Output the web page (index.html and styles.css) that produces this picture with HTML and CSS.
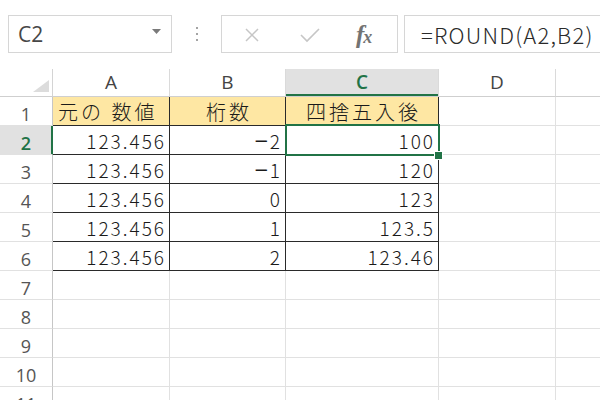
FILE: index.html
```html
<!DOCTYPE html>
<html lang="ja">
<head>
<meta charset="utf-8">
<title>ROUND</title>
<link rel="stylesheet" href="styles.css">
</head>
<body>
<div class="toolbar">
  <div class="namebox">
    <span class="name">C2</span>
    <svg class="caret" width="9" height="5" viewBox="0 0 9 5"><polygon points="0,0 9,0 4.5,5" fill="#7a7a7a"/></svg>
  </div>
  <div class="dots"><i></i><i></i><i></i></div>
  <div class="fbuttons">
    <svg class="icon-x" width="16" height="16" viewBox="0 0 16 16"><path d="M2 2 L14 14 M14 2 L2 14" stroke="#c6c6c6" stroke-width="1.5" fill="none"/></svg>
    <svg class="icon-check" width="20" height="16" viewBox="0 0 20 16"><polyline points="1,8 7,14 19,2" stroke="#c6c6c6" stroke-width="1.6" fill="none"/></svg>
    <span class="fx">f<span class="fx-x">x</span></span>
  </div>
  <div class="formula">=ROUND(A2,B2)</div>
</div>

<div class="sheet">
  <div class="corner"><svg width="16" height="12" viewBox="0 0 16 12"><polygon points="16,0 16,12 0,12" fill="#dcdcdc"/></svg></div>
  <div class="ch">A</div>
  <div class="ch">B</div>
  <div class="ch active">C</div>
  <div class="ch">D</div>
  <div class="ch"></div>

  <div class="rh">1</div>
  <div class="c t head left">元の 数値</div>
  <div class="c t head center">桁数</div>
  <div class="c t head center">四捨五入後</div>
  <div class="c"></div>
  <div class="c"></div>

  <div class="rh active">2</div>
  <div class="c t num">123.456</div>
  <div class="c t num"><span class="m">−</span>2</div>
  <div class="c t num selected">100</div>
  <div class="c"></div>
  <div class="c"></div>

  <div class="rh">3</div>
  <div class="c t num">123.456</div>
  <div class="c t num"><span class="m">−</span>1</div>
  <div class="c t num">120</div>
  <div class="c"></div>
  <div class="c"></div>

  <div class="rh">4</div>
  <div class="c t num">123.456</div>
  <div class="c t num">0</div>
  <div class="c t num">123</div>
  <div class="c"></div>
  <div class="c"></div>

  <div class="rh">5</div>
  <div class="c t num">123.456</div>
  <div class="c t num">1</div>
  <div class="c t num">123.5</div>
  <div class="c"></div>
  <div class="c"></div>

  <div class="rh">6</div>
  <div class="c t num">123.456</div>
  <div class="c t num">2</div>
  <div class="c t num">123.46</div>
  <div class="c"></div>
  <div class="c"></div>

  <div class="rh">7</div>
  <div class="c"></div><div class="c"></div><div class="c"></div><div class="c"></div><div class="c"></div>
  <div class="rh">8</div>
  <div class="c"></div><div class="c"></div><div class="c"></div><div class="c"></div><div class="c"></div>
  <div class="rh">9</div>
  <div class="c"></div><div class="c"></div><div class="c"></div><div class="c"></div><div class="c"></div>
  <div class="rh">10</div>
  <div class="c"></div><div class="c"></div><div class="c"></div><div class="c"></div><div class="c"></div>
  <div class="rh">11</div>
  <div class="c"></div><div class="c"></div><div class="c"></div><div class="c"></div><div class="c"></div>
</div>
</body>
</html>
```

FILE: styles.css
```css
html, body {
  margin: 0;
  padding: 0;
  background: #ffffff;
  overflow: hidden;
  width: 600px;
  height: 400px;
}

body {
  font-family: "Open Sans", "Noto Sans", sans-serif;
  color: #444444;
}

/* ---------- toolbar ---------- */
.toolbar {
  height: 69px;
  box-sizing: border-box;
  padding: 15px 0 0 8px;
  display: flex;
  align-items: flex-start;
  width: 820px;
}

.namebox {
  width: 164px;
  height: 38px;
  box-sizing: border-box;
  border: 1px solid #d6d6d6;
  display: flex;
  align-items: center;
  padding-left: 9px;
  padding-right: 10px;
}

.name {
  font-family: "Open Sans", sans-serif;
  font-size: 21px;
  color: #474747;
  line-height: 1;
}

.caret {
  margin-left: auto;
  margin-bottom: 5px;
}

.dots {
  width: 49px;
  height: 38px;
  display: flex;
  flex-direction: column;
  align-items: center;
  justify-content: center;
  gap: 4px;
}

.dots i {
  display: block;
  width: 2px;
  height: 2px;
  background: #a4a4a4;
}

.fbuttons {
  width: 177px;
  height: 38px;
  box-sizing: border-box;
  border: 1px solid #d6d6d6;
  display: flex;
  align-items: center;
  padding-left: 22px;
}

.icon-x {
  margin-top: 2px;
}

.icon-check {
  margin-left: 40px;
  margin-top: 2px;
}

.fx {
  margin-left: 36px;
  font-family: "Liberation Serif", "DejaVu Serif", serif;
  font-style: italic;
  font-weight: bold;
  font-size: 25px;
  color: #737373;
  line-height: 1;
  letter-spacing: -1px;
}

.fx-x {
  font-size: 18px;
}

.formula {
  margin-left: 6px;
  width: 220px;
  height: 38px;
  box-sizing: border-box;
  border: 1px solid #d6d6d6;
  display: flex;
  align-items: center;
  padding-left: 16px;
  font-family: "Noto Sans CJK JP", "Liberation Sans", sans-serif;
  font-weight: 300;
  font-size: 22px;
  letter-spacing: 1.2px;
  color: #2a2a2a;
  line-height: 1;
  white-space: nowrap;
}

/* ---------- sheet ---------- */
.sheet {
  display: grid;
  grid-template-columns: 53px 117px 116px 153px 117px 80px;
  grid-template-rows: 28px repeat(11, 29px);
  width: 636px;
}

.corner,
.ch,
.rh,
.c {
  box-sizing: border-box;
}

.corner {
  border-right: 1px solid #d4d4d4;
  border-bottom: 1px solid #cfcfcf;
  display: flex;
  justify-content: flex-end;
  align-items: flex-end;
  padding: 0 3px 4px 0;
}

.ch {
  border-right: 1px solid #dadada;
  border-bottom: 1px solid #cfcfcf;
  display: flex;
  align-items: center;
  justify-content: center;
  font-size: 19px;
  color: #444444;
  line-height: 1;
}

.ch.active {
  background: #e1e1e1;
  color: #217346;
  font-weight: 600;
  box-shadow: inset 0 -2px 0 #217346;
}

.rh {
  border-right: 1px solid #c6c6c6;
  border-bottom: 1px solid #e1e1e1;
  display: flex;
  align-items: flex-end;
  justify-content: center;
  padding-bottom: 2px;
  font-size: 18px;
  line-height: 18px;
  color: #555555;
}

.rh.active {
  background: #e1e1e1;
  color: #217346;
  font-weight: 600;
  border-right-color: #217346;
  box-shadow: inset -1px 0 0 #217346;
}

.c {
  border-right: 1px solid #e1e1e1;
  border-bottom: 1px solid #e1e1e1;
  display: flex;
  align-items: flex-end;
  font-family: "Noto Sans CJK JP", "Liberation Sans", sans-serif;
  font-weight: 300;
  color: #1a1a1a;
  white-space: nowrap;
}

.c.t {
  border-right-color: #2a2a2a;
  border-bottom-color: #2a2a2a;
}

.c.head {
  background: #fee7a3;
  font-size: 20px;
  line-height: 20px;
  letter-spacing: 3px;
  padding: 0 3px 3px 5px;
}

.c.head.center {
  justify-content: center;
  padding-left: 6px;
}

.c.num {
  justify-content: flex-end;
  font-size: 19px;
  line-height: 19px;
  letter-spacing: 2px;
  padding: 0 3px 4px 5px;
}

.m {
  font-family: "DejaVu Sans", sans-serif;
  font-weight: normal;
  font-size: 18px;
  letter-spacing: 1px;
}

.c.selected {
  position: relative;
}

.c.selected::before {
  content: "";
  position: absolute;
  left: -1px;
  top: -2px;
  right: -2px;
  bottom: -2px;
  border: 2px solid #217346;
  z-index: 2;
}

.c.selected::after {
  content: "";
  position: absolute;
  right: -4px;
  bottom: -5px;
  width: 7px;
  height: 7px;
  background: #217346;
  box-shadow: 0 0 0 1px #ffffff;
  z-index: 3;
}
```
